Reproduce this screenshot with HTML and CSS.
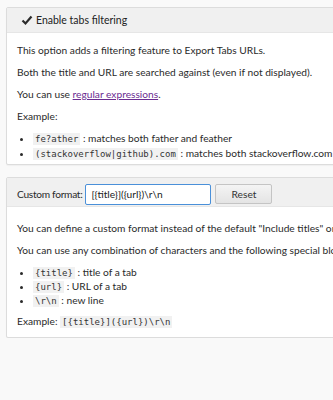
FILE: index.html
```html
<!DOCTYPE html>
<html>
<head>
<meta charset="utf-8">
<link rel="stylesheet" href="styles.css">
</head>
<body>
<div class="page">
  <section class="card">
    <header class="card-head">
      <label class="check">
        <svg class="tick" width="12" height="11" viewBox="0 0 12 11"><path d="M1.5 5.5 L4.5 8.5 L10.5 1.5" fill="none" stroke="#2b2b2b" stroke-width="2.2"/></svg>
        <span>Enable tabs filtering</span>
      </label>
    </header>
    <div class="card-body">
      <p>This option adds a filtering feature to Export Tabs URLs.</p>
      <p>Both the title and URL are searched against (even if not displayed).</p>
      <p>You can use <a href="#">regular expressions</a>.</p>
      <p>Example:</p>
      <ul>
        <li><code>fe?ather</code> : matches both father and feather</li>
        <li><code>(stackoverflow|github).com</code> : matches both stackoverflow.com and github.com</li>
      </ul>
    </div>
  </section>
  <section class="card">
    <header class="card-head form">
      <span class="lbl">Custom format:</span>
      <span class="input">[{title}]({url})\r\n</span>
      <span class="btn">Reset</span>
    </header>
    <div class="card-body second">
      <p>You can define a custom format instead of the default "Include titles" one.</p>
      <p>You can use any combination of characters and the following special blocks:</p>
      <ul class="tight">
        <li><code>{title}</code> : title of a tab</li>
        <li><code>{url}</code> : URL of a tab</li>
        <li><code>\r\n</code> : new line</li>
      </ul>
      <p>Example: <code>[{title}]({url})\r\n</code></p>
    </div>
  </section>
</div>
</body>
</html>
```
FILE: styles.css
```css
html, body {
  margin: 0;
  padding: 0;
  overflow: hidden;
  background: #f9f9f9;
}
body {
  font-family: "Lato", "Noto Sans", sans-serif;
  font-size: 10.2px;
  color: #2a2a2a;
}
.page {
  width: 420px;
  padding: 7px 0 0 6px;
  display: flex;
  flex-direction: column;
  gap: 12px;
}
.card {
  background: #fff;
  border: 1px solid #dcdcdc;
  border-radius: 2px;
  box-shadow: 0 1px 1px rgba(0,0,0,0.04);
  white-space: nowrap;
}
.card-head {
  background: #f0f0f0;
  border-bottom: 1px solid #e6e6e6;
  height: 24px;
  display: flex;
  align-items: center;
  padding: 0 10px;
}
.check {
  display: flex;
  align-items: center;
  gap: 3px;
  padding-left: 4px;
  font-size: 10.5px;
  color: #222;
}
.tick { display: block; }
.form {
  height: 27px;
  align-items: flex-end;
  padding: 0 10px 1px;
}
.lbl {
  align-self: center;
  margin-top: 4px;
  margin-right: 3px;
  letter-spacing: -0.3px;
}
.input {
  width: 116px;
  height: 19px;
  line-height: 19px;
  border: 1px solid #4a90d9;
  border-radius: 2px;
  background: #fff;
  padding: 0 3px 0 5px;
  font-size: 10.2px;
  color: #222;
}
.btn {
  margin-left: 4px;
  margin-bottom: 1px;
  width: 55px;
  height: 18px;
  line-height: 18px;
  text-align: center;
  border: 1px solid #c4c4c4;
  border-radius: 2px;
  background: linear-gradient(#f4f4f4, #e4e4e4);
  color: #333;
}
.card-body {
  padding: 3px 10px 2px;
}
.card-body.second {
  padding: 7px 10px 1px;
}
p {
  margin: 7px 0;
  line-height: 15px;
}
ul {
  margin: 7px 0 1px;
  padding-left: 16px;
}
ul.tight { margin: 7px 0; }
li {
  line-height: 15px;
}
ul.tight li { line-height: 14px; }
code {
  font-family: "DejaVu Sans Mono", monospace;
  font-size: 9px;
  line-height: 10px;
  background: #f1f1f1;
  padding: 1px 2px;
  color: #333;
}
a {
  color: #6a2c91;
  text-decoration: underline;
}
```
